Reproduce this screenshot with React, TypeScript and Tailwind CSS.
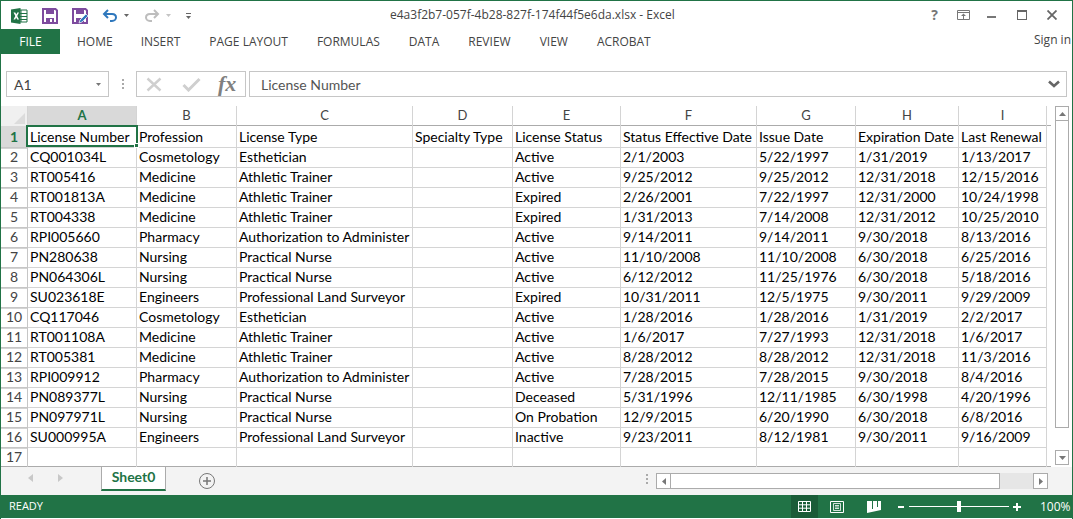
import React from "react";

const columns = ["A", "B", "C", "D", "E", "F", "G", "H", "I"];

const rows = [
  ["License Number", "Profession", "License Type", "Specialty Type", "License Status", "Status Effective Date", "Issue Date", "Expiration Date", "Last Renewal"],
  ["CQ001034L", "Cosmetology", "Esthetician", "", "Active", "2/1/2003", "5/22/1997", "1/31/2019", "1/13/2017"],
  ["RT005416", "Medicine", "Athletic Trainer", "", "Active", "9/25/2012", "9/25/2012", "12/31/2018", "12/15/2016"],
  ["RT001813A", "Medicine", "Athletic Trainer", "", "Expired", "2/26/2001", "7/22/1997", "12/31/2000", "10/24/1998"],
  ["RT004338", "Medicine", "Athletic Trainer", "", "Expired", "1/31/2013", "7/14/2008", "12/31/2012", "10/25/2010"],
  ["RPI005660", "Pharmacy", "Authorization to Administer", "", "Active", "9/14/2011", "9/14/2011", "9/30/2018", "8/13/2016"],
  ["PN280638", "Nursing", "Practical Nurse", "", "Active", "11/10/2008", "11/10/2008", "6/30/2018", "6/25/2016"],
  ["PN064306L", "Nursing", "Practical Nurse", "", "Active", "6/12/2012", "11/25/1976", "6/30/2018", "5/18/2016"],
  ["SU023618E", "Engineers", "Professional Land Surveyor", "", "Expired", "10/31/2011", "12/5/1975", "9/30/2011", "9/29/2009"],
  ["CQ117046", "Cosmetology", "Esthetician", "", "Active", "1/28/2016", "1/28/2016", "1/31/2019", "2/2/2017"],
  ["RT001108A", "Medicine", "Athletic Trainer", "", "Active", "1/6/2017", "7/27/1993", "12/31/2018", "1/6/2017"],
  ["RT005381", "Medicine", "Athletic Trainer", "", "Active", "8/28/2012", "8/28/2012", "12/31/2018", "11/3/2016"],
  ["RPI009912", "Pharmacy", "Authorization to Administer", "", "Active", "7/28/2015", "7/28/2015", "9/30/2018", "8/4/2016"],
  ["PN089377L", "Nursing", "Practical Nurse", "", "Deceased", "5/31/1996", "12/11/1985", "6/30/1998", "4/20/1996"],
  ["PN097971L", "Nursing", "Practical Nurse", "", "On Probation", "12/9/2015", "6/20/1990", "6/30/2018", "6/8/2016"],
  ["SU000995A", "Engineers", "Professional Land Surveyor", "", "Inactive", "9/23/2011", "8/12/1981", "9/30/2011", "9/16/2009"],
  ["", "", "", "", "", "", "", "", ""],
];

const tabs = ["HOME", "INSERT", "PAGE LAYOUT", "FORMULAS", "DATA", "REVIEW", "VIEW", "ACROBAT"];
const tabGaps = ["ml-[17px]", "ml-[28px]", "ml-[29px]", "ml-[29px]", "ml-[29px]", "ml-[29px]", "ml-[29px]", "ml-[29px]"];

const gridCols = "grid grid-cols-[27px_109px_100px_176px_100px_108px_136px_99px_103px_88px]";

function ExcelLogo() {
  return (
    <svg width="17" height="16" viewBox="0 0 17 16">
      <path d="M6 2h10v12H6z" fill="#fff" stroke="#217346" />
      <path d="M10 2v12M6 5.5h10M6 8.5h10M6 11.5h10" stroke="#217346" />
      <path d="M0 1.5 9.5 0v16L0 14.5z" fill="#217346" />
      <path d="M2.5 4.5h1.8l1 2 1-2h1.7L6.2 8 8 11.5H6.2l-1-2.1-1 2.1H2.5L4.3 8z" fill="#fff" />
    </svg>
  );
}

function SaveIcon({ edit }: { edit?: boolean }) {
  return (
    <svg width="16" height="16" viewBox="0 0 16 16">
      <path d="M1 1h12.5L15 2.5V15H1z" fill="none" stroke="#7d4b9e" strokeWidth="2" />
      <path d="M4 1h8v5H4z" fill="#7d4b9e" />
      <path d="M4 10h8v5H4z" fill="#7d4b9e" />
      <path d="M8 11h2v3H8z" fill="#fff" />
      {edit && <path d="M7 15l1-3 6-6 2 2-6 6z" fill="#2f78bd" stroke="#fff" strokeWidth="0.7" />}
    </svg>
  );
}

function UndoIcon({ color }: { color: string }) {
  return (
    <svg width="16" height="14" viewBox="0 0 16 14">
      <path d="M6 1 2 5l4 4" fill="none" stroke={color} strokeWidth="2" />
      <path d="M2 5h8c3 0 4 2 4 3.500S12.500 12 10 12H8" fill="none" stroke={color} strokeWidth="2" />
    </svg>
  );
}

function Caret({ color }: { color: string }) {
  return (
    <svg width="5" height="3" viewBox="0 0 5 3">
      <path d="M0 0h5L2.500 3z" fill={color} />
    </svg>
  );
}

function QuickAccess() {
  return (
    <div className="flex w-[389px] items-center pl-[10px] pt-px">
      <ExcelLogo />
      <div className="ml-[14px]">
        <SaveIcon />
      </div>
      <div className="ml-[14px]">
        <SaveIcon edit />
      </div>
      <div className="ml-[14px]">
        <UndoIcon color="#2f78bd" />
      </div>
      <div className="ml-[6px]">
        <Caret color="#666" />
      </div>
      <div className="ml-[15px] scale-x-[-1]">
        <UndoIcon color="#bdbdbd" />
      </div>
      <div className="ml-[6px]">
        <Caret color="#c4c4c4" />
      </div>
      <div className="ml-[15px] flex flex-col items-center gap-[2px]">
        <div className="h-px w-[5px] bg-[#666]" />
        <Caret color="#666" />
      </div>
    </div>
  );
}

function WindowControls() {
  return (
    <div className="ml-auto flex items-center pr-[15px] text-[#777]">
      <span className="mr-[19px] font-['Open_Sans',sans-serif] text-[14px] font-bold leading-none">?</span>
      <svg width="13" height="10" viewBox="0 0 13 10" className="mr-[17px]">
        <path d="M.5.5h12v9H.5z" fill="none" stroke="#777" />
        <path d="M1 2.500h11" stroke="#777" />
        <path d="M6.500 3.500 4 6h5zM6 6h1v3H6z" fill="#777" />
      </svg>
      <div className="mr-[21px] mt-[4px] h-[2px] w-[9px] bg-[#777]" />
      <div className="mr-[20px] h-[10px] w-[10px] border border-t-2 border-[#666]" />
      <svg width="10" height="10" viewBox="0 0 10 10">
        <path d="M.5.5l9 9M9.500.5l-9 9" stroke="#666" strokeWidth="1.800" />
      </svg>
    </div>
  );
}

function FormulaBar() {
  return (
    <div className="mt-[17px] flex h-[26px] items-stretch pl-[5px] pr-[5px]">
      <div className="flex w-[103px] items-center justify-between border border-[#c6c6c6] pl-[7px] pr-[7px] font-['Lato',sans-serif] text-[14px] text-[#444]">
        A1
        <Caret color="#777" />
      </div>
      <div className="mx-[12px] flex w-[3px] flex-col justify-center gap-[2px] pl-px">
        <div className="h-[2px] w-[2px] bg-[#aaa]" />
        <div className="h-[2px] w-[2px] bg-[#aaa]" />
        <div className="h-[2px] w-[2px] bg-[#aaa]" />
      </div>
      <div className="flex w-[110px] items-center border border-[#c6c6c6] pl-[9px]">
        <svg width="17" height="15" viewBox="0 0 17 15">
          <path d="M1.500 1.500l13 12M14.500 1.500l-13 12" stroke="#cfcfcf" strokeWidth="2.400" />
        </svg>
        <svg width="19" height="15" viewBox="0 0 19 15" className="ml-[19px]">
          <path d="M1.500 8l5 5L17.500 2" fill="none" stroke="#cfcfcf" strokeWidth="3" />
        </svg>
        <span className="ml-[17px] font-['Liberation_Serif',serif] text-[22px] font-bold italic leading-none text-[#808080]">fx</span>
      </div>
      <div className="ml-[3px] flex flex-1 items-center justify-between border border-[#c6c6c6] pl-[11px] pr-[6px]">
        <span className="font-['Lato',sans-serif] text-[14px] text-[#555]">License Number</span>
        <svg width="12" height="8" viewBox="0 0 12 8">
          <path d="M1 1.500 6 6l5-4.500" fill="none" stroke="#666" strokeWidth="2.600" />
        </svg>
      </div>
    </div>
  );
}

function Sheet() {
  return (
    <div className="relative mt-[9px] flex h-[361px] pr-[3px]">
      <div className="w-[1050px] shrink-0 overflow-hidden font-['Lato',sans-serif] text-[14px] text-black">
        <div className={`${gridCols} h-[20px] border-b border-[#ababab]`}>
          <div className="flex items-end justify-end border-r border-[#d4d4d4] bg-[#f0f0f0] p-[2px]">
            <div className="h-0 w-0 border-b-[11px] border-l-[11px] border-b-[#dcdcdc] border-l-transparent" />
          </div>
          {columns.map((c, i) => (
            <div
              key={c}
              className={`flex items-center justify-center border-r border-[#d4d4d4] text-[13px] ${i === 0 ? "bg-[#d9d9d9] font-bold text-[#217346]" : "text-[#444]"}`}
            >
              {c}
            </div>
          ))}
          <div />
        </div>
        {rows.map((row, r) => (
          <div key={r} className={`${gridCols} h-[20px]`}>
            <div
              className={`flex items-center justify-center border-r border-b border-[#c6c6c6] text-[14px] ${r === 0 ? "bg-[#d9d9d9] font-bold text-[#217346]" : "text-[#444]"}`}
            >
              {r + 1}
            </div>
            {row.map((cell, c) => (
              <div
                key={c}
                className="flex items-center overflow-visible whitespace-nowrap border-r border-b border-[#d4d4d4] pl-[2px]"
              >
                {cell}
              </div>
            ))}
            <div className="border-b border-[#d4d4d4]" />
          </div>
        ))}
        <div className="h-px bg-[#ababab]" />
      </div>
      {/* active cell outline */}
      <div className="absolute left-[25px] top-[19px] h-[22px] w-[112px] border-2 border-[#217346]">
        <div className="absolute -bottom-[3px] -right-[3px] h-[5px] w-[5px] border border-white bg-[#217346]" />
      </div>
      <VerticalScroll />
    </div>
  );
}

function VerticalScroll() {
  return (
    <div className="ml-[4px] flex w-[15px] flex-col">
      <div className="flex h-[15px] items-center justify-center border border-[#ababab]">
        <svg width="7" height="4" viewBox="0 0 7 4">
          <path d="M0 4h7L3.500 0z" fill="#777" />
        </svg>
      </div>
      <div className="flex-1 border border-t-0 border-[#ababab] mb-[22px]" />
      <div className="flex h-[15px] items-center justify-center border border-[#ababab] mb-[2px]">
        <svg width="7" height="4" viewBox="0 0 7 4">
          <path d="M0 0h7L3.500 4z" fill="#777" />
        </svg>
      </div>
    </div>
  );
}

function TabStrip() {
  return (
    <div className="flex h-[28px] items-start bg-[#f3f3f3]">
      <div className="flex w-[100px] items-center pl-[27px] pt-[7px]">
        <svg width="6" height="8" viewBox="0 0 6 8">
          <path d="M5 0v8L0 4z" fill="#c8c8c8" />
        </svg>
        <svg width="6" height="8" viewBox="0 0 6 8" className="ml-[23px]">
          <path d="M1 0v8l5-4z" fill="#c8c8c8" />
        </svg>
      </div>
      <div className="-mt-px flex h-[25px] w-[65px] items-center justify-center border-x border-[#ababab] border-b-2 border-b-[#217346] bg-white pb-[2px] font-['Lato',sans-serif] text-[14px] font-bold text-[#217346]">
        Sheet0
      </div>
      <div className="ml-[33px] mt-[6px] flex h-[16px] w-[16px] items-center justify-center rounded-full border border-[#777]">
        <svg width="8" height="8" viewBox="0 0 8 8">
          <path d="M4 0v8M0 4h8" stroke="#777" strokeWidth="1.500" />
        </svg>
      </div>
      <div className="ml-[431px] mt-[7px] flex w-[3px] flex-col gap-[2px]">
        <div className="h-[2px] w-[2px] bg-[#aaa]" />
        <div className="h-[2px] w-[2px] bg-[#aaa]" />
        <div className="h-[2px] w-[2px] bg-[#aaa]" />
      </div>
      <div className="ml-[7px] mt-[6px] flex h-[16px] items-stretch">
        <div className="flex w-[15px] items-center justify-center border border-[#ababab] bg-white">
          <svg width="4" height="7" viewBox="0 0 4 7">
            <path d="M4 0v7L0 3.500z" fill="#777" />
          </svg>
        </div>
        <div className="w-[329px] border-y border-r border-[#ababab] bg-white" />
        <div className="w-[33px] bg-[#e6e6e6]" />
        <div className="flex w-[15px] items-center justify-center border border-[#ababab] bg-white">
          <svg width="4" height="7" viewBox="0 0 4 7">
            <path d="M0 0v7l4-3.500z" fill="#777" />
          </svg>
        </div>
      </div>
    </div>
  );
}

function StatusBar() {
  return (
    <div className="-mx-px flex h-[23px] items-center bg-[#217346] pl-[9px] font-['Open_Sans',sans-serif] text-[11px] text-white">
      READY
      <div className="ml-auto flex h-full items-center">
        <div className="flex h-full w-[27px] items-center justify-center bg-[#1a5c38]">
          <svg width="13" height="11" viewBox="0 0 13 11">
            <path d="M.5.5h12v10H.5zM4.500.5v10M8.500.5v10M.5 3.800h12M.5 7.200h12" fill="none" stroke="#fff" />
          </svg>
        </div>
        <svg width="14" height="12" viewBox="0 0 14 12" className="ml-[12px]">
          <path d="M.5.5h13v11H.5z" fill="none" stroke="#fff" />
          <path d="M3.500 2.500h7v7h-7zM5 4.500h4M5 6h4M5 7.500h4" fill="none" stroke="#fff" strokeWidth="0.800" />
        </svg>
        <svg width="14" height="12" viewBox="0 0 14 12" className="ml-[23px]">
          <path d="M0 0h14v9l-14 3z" fill="#fff" />
          <path d="M5 0h1v8H5zM10 0h1v6h-1z" fill="#217346" />
        </svg>
        <div className="ml-[17px] h-[2px] w-[6px] bg-white" />
        <div className="relative ml-[5px] h-px w-[100px] bg-white">
          <div className="absolute -top-[5px] left-[48px] h-[11px] w-[4px] bg-white" />
        </div>
        <div className="relative ml-[4px] h-[8px] w-[8px]">
          <div className="absolute left-0 top-[3px] h-[2px] w-[8px] bg-white" />
          <div className="absolute left-[3px] top-0 h-[8px] w-[2px] bg-white" />
        </div>
        <span className="ml-[19px] w-[33px] text-[12px] leading-none">100%</span>
      </div>
    </div>
  );
}

export default function App() {
  return (
    <div className="flex h-[519px] w-[1073px] flex-col overflow-hidden border-x border-t border-[#217346] bg-white">
      <div className="flex h-[28px] shrink-0 items-center">
        <QuickAccess />
        <span className="font-['Open_Sans',sans-serif] text-[12px] text-[#444]">
          e4a3f2b7-057f-4b28-827f-174f44f5e6da.xlsx - Excel
        </span>
        <WindowControls />
      </div>
      <div className="flex h-[25px] shrink-0 items-center font-['Open_Sans',sans-serif] text-[12px] text-[#444]">
        <div className="flex h-full w-[59px] items-center justify-center bg-[#217346] text-white">FILE</div>
        {tabs.map((t, i) => (
          <span key={t} className={tabGaps[i]}>
            {t}
          </span>
        ))}
        <span className="ml-auto -mt-[4px] pr-px">Sign in</span>
      </div>
      <FormulaBar />
      <Sheet />
      <TabStrip />
      <StatusBar />
    </div>
  );
}
